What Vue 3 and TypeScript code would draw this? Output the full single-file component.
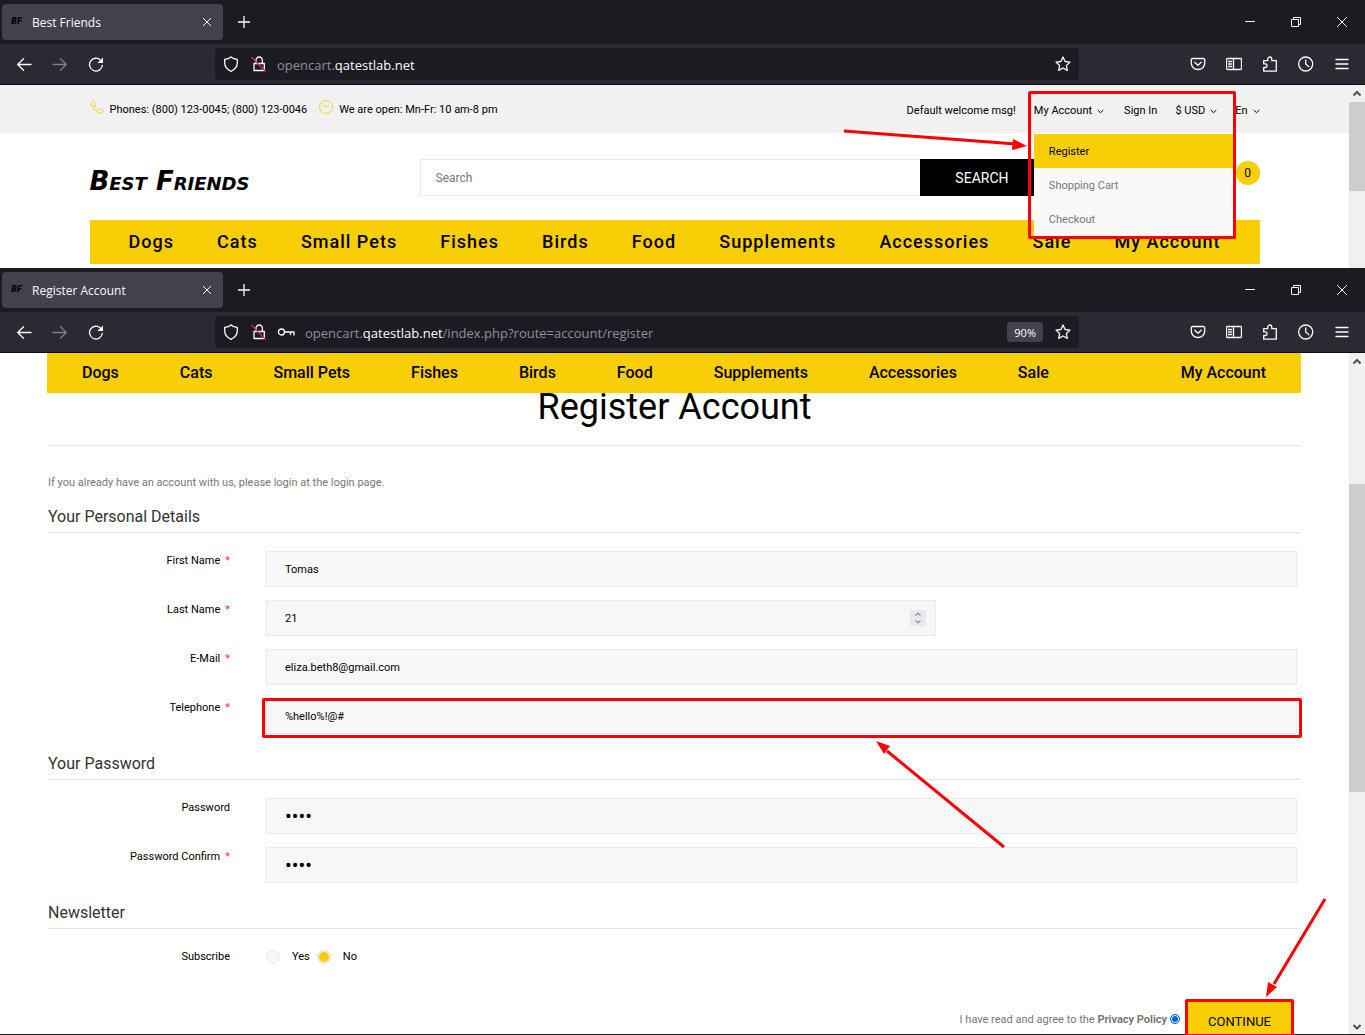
<script setup lang="ts">
import { ref } from 'vue'

interface BrowserWindow {
  id: 'home' | 'register'
  title: string
  path: string
  zoom: string
  savedLogin: boolean
  scroll: { before: number; thumb: number; after: number }
}

const windows: BrowserWindow[] = [
  { id: 'home', title: 'Best Friends', path: '', zoom: '', savedLogin: false, scroll: { before: 0, thumb: 89, after: 77 } },
  {
    id: 'register',
    title: 'Register Account',
    path: '/index.php?route=account/register',
    zoom: '90%',
    savedLogin: true,
    scroll: { before: 114, thumb: 307, after: 226 },
  },
]

const categories = ['Dogs', 'Cats', 'Small Pets', 'Fishes', 'Birds', 'Food', 'Supplements', 'Accessories', 'Sale']

interface Field {
  id: string
  label: string
  type: string
  required: boolean
}

const personal: Field[] = [
  { id: 'firstname', label: 'First Name', type: 'text', required: true },
  { id: 'lastname', label: 'Last Name', type: 'number', required: true },
  { id: 'email', label: 'E-Mail', type: 'email', required: true },
  { id: 'telephone', label: 'Telephone', type: 'tel', required: true },
]
const passwords: Field[] = [
  { id: 'password', label: 'Password', type: 'password', required: false },
  { id: 'confirm', label: 'Password Confirm', type: 'password', required: true },
]

const values = ref<Record<string, string | number>>({
  firstname: 'Tomas',
  lastname: 21,
  email: 'eliza.beth8@gmail.com',
  telephone: '%hello%!@#',
  password: 'abcd',
  confirm: 'abcd',
})
const newsletter = ref('no')
const agree = ref('yes')
const search = ref('')
</script>

<template>
  <div class="desktop">
    <section v-for="win in windows" :key="win.id" class="window" :class="win.id">
      <header class="chrome">
        <div class="tabs">
          <div class="tab">
            <span class="favicon">BF</span>
            <span class="tab-title">{{ win.title }}</span>
            <button class="tab-close" type="button" aria-label="Close tab">
              <svg width="10" height="10" viewBox="0 0 10 10"><path d="M1 1l8 8M9 1L1 9" /></svg>
            </button>
          </div>
          <button class="new-tab" type="button" aria-label="New tab">
            <svg width="12" height="12" viewBox="0 0 12 12"><path d="M6 0v12M0 6h12" /></svg>
          </button>
          <div class="controls">
            <button type="button" aria-label="Minimize">
              <svg width="12" height="12" viewBox="0 0 12 12"><path d="M1 5.500h10" /></svg>
            </button>
            <button type="button" aria-label="Restore">
              <svg width="12" height="12" viewBox="0 0 12 12"><path d="M1.500 3.500h7v7h-7zM3.500 3V1.500h7v7H9" /></svg>
            </button>
            <button type="button" aria-label="Close">
              <svg width="12" height="12" viewBox="0 0 12 12"><path d="M1 1l10 10M11 1L1 11" /></svg>
            </button>
          </div>
        </div>

        <div class="toolbar">
          <button class="tool" type="button" aria-label="Back">
            <svg class="icon" viewBox="0 0 16 16"><path d="M15 8.500H1.700M7.500 2.700L1.700 8.500l5.800 5.800" /></svg>
          </button>
          <button class="tool dim" type="button" aria-label="Forward">
            <svg class="icon" viewBox="0 0 16 16"><path d="M1 8.500h13.300M8.500 2.700l5.800 5.800-5.800 5.800" /></svg>
          </button>
          <button class="tool" type="button" aria-label="Reload">
            <svg class="icon" viewBox="0 0 16 16">
              <path d="M14.300 9.500A6.400 6.400 0 1 1 12.500 4.100" />
              <path class="solid" d="M15 1.500v5.600H9.400z" />
            </svg>
          </button>

          <div class="urlbar">
            <svg class="icon" viewBox="0 0 16 16">
              <path d="M8 .9C6.200 2.400 4 3 1.700 3.300v3.500c0 4 2.300 6.800 6.300 8.500 4-1.700 6.300-4.500 6.300-8.500V3.300C12 3 9.800 2.400 8 .9z" />
            </svg>
            <svg class="icon lock" viewBox="0 0 16 16">
              <path d="M3 7.500h10.300v7H3zM5 7.500V4.200a3.200 3.200 0 0 1 6.400 0v3.300" />
              <path class="slash" d="M1 1.500l13.500 14" />
            </svg>
            <svg v-if="win.savedLogin" class="icon key" viewBox="0 0 18 16">
              <circle cx="4.500" cy="8" r="3" />
              <path d="M7.500 8H17v3M13.500 8v2.500" />
            </svg>
            <span class="address">opencart.<b>qatestlab.net</b>{{ win.path }}</span>
            <button v-if="win.zoom" class="zoom" type="button">{{ win.zoom }}</button>
            <svg class="icon star" viewBox="0 0 16 16">
              <path d="M8 1l2.100 4.500 4.900.6-3.600 3.400.9 4.900L8 12l-4.300 2.400.9-4.900L1 6.100l4.900-.6z" />
            </svg>
          </div>

          <button class="tool" type="button" aria-label="Pocket">
            <svg class="icon" viewBox="0 0 16 16">
              <path d="M2.500 2.500h11a1.200 1.200 0 0 1 1.200 1.200v3.600a6.700 6.200 0 0 1-13.400 0V3.700a1.200 1.200 0 0 1 1.200-1.200z" />
              <path d="M4.800 6.300L8 9.200l3.200-2.900" />
            </svg>
          </button>
          <button class="tool" type="button" aria-label="Sidebar">
            <svg class="icon" viewBox="0 0 16 16">
              <path d="M1.500 2.500h13a1 1 0 0 1 1 1v9a1 1 0 0 1-1 1h-13a1 1 0 0 1-1-1v-9a1 1 0 0 1 1-1zM7.500 2.500v11M2.500 5.500h3M2.500 8h3M2.500 10.500h3" />
            </svg>
          </button>
          <button class="tool" type="button" aria-label="Extensions">
            <svg class="icon" viewBox="0 0 16 16">
              <path d="M1.700 15.200v-3.700h1.600a1.800 1.800 0 0 0 0-3.600H1.700V4.700h4.100V3a2 2 0 0 1 4 0v1.700h4.500v10.500z" />
            </svg>
          </button>
          <button class="tool" type="button" aria-label="History">
            <svg class="icon" viewBox="0 0 16 16">
              <circle cx="7.700" cy="8" r="7" />
              <path d="M7.700 3.800V8l3.200 2.700" />
            </svg>
          </button>
          <button class="tool" type="button" aria-label="Menu">
            <svg class="icon" viewBox="0 0 16 16"><path d="M2 3.500h12M2 8h12M2 12.500h12" /></svg>
          </button>
        </div>
      </header>

      <div class="viewport">
        <main v-if="win.id === 'home'" class="page">
          <div class="topbar">
            <div class="container topbar-row">
              <svg class="contact-icon" viewBox="0 0 16 16">
                <path d="M3.600 1C2.400 1.700 1 2.800 1.300 4.600c.5 2.700 2 5 4 6.900s4.200 3.200 6.700 3.500c1.600.1 2.400-1 2.900-2.200.2-.5 0-.9-.4-1.200l-2.300-1.600c-.5-.3-1-.2-1.300.2l-.9 1.200C8 10.600 5.900 8.500 4.900 6.300l1.200-.9c.4-.4.5-.8.200-1.300L4.800 1.300C4.500.9 4 .8 3.600 1z" />
              </svg>
              <span>Phones: (800) 123-0045; (800) 123-0046</span>
              <svg class="contact-icon second" viewBox="0 0 16 16">
                <circle cx="8" cy="8" r="7.400" />
                <path d="M4.500 5.500L8 8l3.500-2" />
              </svg>
              <span>We are open: Mn-Fr: 10 am-8 pm</span>

              <ul class="account-links">
                <li>Default welcome msg!</li>
                <li class="account">
                  <button type="button">
                    My Account
                    <svg class="caret" viewBox="0 0 7 5"><path d="M.7 1l2.800 2.700L6.300 1" /></svg>
                  </button>
                  <div class="dropdown">
                    <a class="active" href="#">Register</a>
                    <a href="#">Shopping Cart</a>
                    <a href="#">Checkout</a>
                  </div>
                  <div class="mark account-mark">
                    <svg class="arrow-right" width="186" height="26" viewBox="0 0 186 26">
                      <path class="shaft" d="M1 4l172 13" />
                      <path class="tip" d="M170 12l14 7-15 4z" />
                    </svg>
                  </div>
                </li>
                <li><a href="#">Sign In</a></li>
                <li>
                  <button type="button">
                    $ USD
                    <svg class="caret" viewBox="0 0 7 5"><path d="M.7 1l2.800 2.700L6.300 1" /></svg>
                  </button>
                </li>
                <li>
                  <button type="button">
                    En
                    <svg class="caret" viewBox="0 0 7 5"><path d="M.7 1l2.800 2.700L6.300 1" /></svg>
                  </button>
                </li>
              </ul>
            </div>
          </div>

          <div class="container masthead">
            <a class="logo" href="#">Best Friends</a>
            <form class="search" @submit.prevent>
              <input v-model="search" type="text" placeholder="Search" aria-label="Search" />
              <button type="submit">SEARCH</button>
            </form>
            <a class="cart" href="#" aria-label="Cart">0</a>
          </div>

          <nav class="container menu">
            <a v-for="item in categories" :key="item" href="#">{{ item }}</a>
            <a href="#">My Account</a>
          </nav>
        </main>

        <main v-else class="page">
          <nav class="sticky-menu">
            <a v-for="item in categories" :key="item" href="#">{{ item }}</a>
            <a class="last" href="#">My Account</a>
          </nav>

          <form class="register-form" @submit.prevent>
            <h1>Register Account</h1>
            <p>If you already have an account with us, please login at the <a href="#">login page</a>.</p>

            <h2>Your Personal Details</h2>
            <div class="rows">
              <div v-for="field in personal" :key="field.id" class="row">
                <label :for="field.id">{{ field.label }}<i v-if="field.required">*</i></label>
                <div class="control" :class="{ short: field.type === 'number' }">
                  <input :id="field.id" v-model="values[field.id]" :type="field.type" />
                  <svg v-if="field.type === 'number'" class="spinner" viewBox="0 0 16 16">
                    <path d="M5.500 5.500L8 3.200l2.500 2.300M5.500 10.500L8 12.800l2.500-2.300" />
                  </svg>
                  <div v-if="field.id === 'telephone'" class="mark phone-mark">
                    <svg class="arrow-up" width="134" height="112" viewBox="0 0 134 112">
                      <path class="shaft" d="M12 12l117 96" />
                      <path class="tip" d="M1 2l14 5-6 8z" />
                    </svg>
                  </div>
                </div>
              </div>
            </div>

            <h2>Your Password</h2>
            <div class="rows">
              <div v-for="field in passwords" :key="field.id" class="row">
                <label :for="field.id">{{ field.label }}<i v-if="field.required">*</i></label>
                <div class="control">
                  <input :id="field.id" v-model="values[field.id]" :type="field.type" />
                </div>
              </div>
            </div>

            <h2>Newsletter</h2>
            <div class="rows">
              <div class="row" role="radiogroup" aria-labelledby="subscribe">
                <span id="subscribe" class="row-label">Subscribe</span>
                <div class="choices">
                  <label><input v-model="newsletter" type="radio" name="newsletter" value="yes" />Yes</label>
                  <label><input v-model="newsletter" type="radio" name="newsletter" value="no" />No</label>
                </div>
              </div>
            </div>

            <div class="submit-row">
              <label for="agree">I have read and agree to the <b>Privacy Policy</b></label>
              <input id="agree" v-model="agree" type="radio" name="agree" value="yes" />
              <div class="submit">
                <button type="submit">CONTINUE</button>
                <div class="mark submit-mark">
                  <svg class="arrow-down" width="64" height="104" viewBox="0 0 64 104">
                    <path class="shaft" d="M61 3L10 88" />
                    <path class="tip" d="M2 101l2-15 9 5z" />
                  </svg>
                </div>
              </div>
            </div>
          </form>
        </main>

        <div class="scrollbar" aria-hidden="true">
          <svg class="scroll-arrow" viewBox="0 0 16 17"><path d="M4.500 10.500L8 7l3.500 3.500" /></svg>
          <div :style="{ flexGrow: win.scroll.before }"></div>
          <div class="thumb" :style="{ flexGrow: win.scroll.thumb }"></div>
          <div :style="{ flexGrow: win.scroll.after }"></div>
          <svg v-if="win.id === 'register'" class="scroll-arrow" viewBox="0 0 16 17"><path d="M4.500 7L8 10.500 11.500 7" /></svg>
        </div>
      </div>
    </section>
  </div>
</template>

<style>
body {
  margin: 0;
  background: #fff;
}
</style>

<style scoped>
.desktop,
.desktop * {
  box-sizing: border-box;
}

.desktop {
  display: flex;
  flex-direction: column;
  height: 100vh;
  overflow: hidden;
  color: #000;
  font-family: Roboto, sans-serif;
  font-size: 11px;
  line-height: 20px;
}

button,
input {
  margin: 0;
  font-family: inherit;
  font-size: inherit;
}

button {
  padding: 0;
  border: 0;
  background: none;
  color: inherit;
}

a {
  color: inherit;
  text-decoration: none;
}

.window {
  display: flex;
  flex-direction: column;
}

.window.register {
  position: relative;
  flex: 1;
  min-height: 0;
}

.window.register::after {
  content: '';
  position: absolute;
  right: 0;
  bottom: 0;
  left: 0;
  height: 1px;
  background: #1c1b22;
}

/* Browser chrome */
.chrome {
  flex: none;
  border-bottom: 1px solid #0c0c0d;
  background: #2b2a33;
  color: #fbfbfe;
  font-family: 'Open Sans', 'Noto Sans', sans-serif;
}

.chrome svg {
  flex: none;
  fill: none;
  stroke: currentColor;
}

.icon {
  width: 16px;
  height: 16px;
  stroke-width: 1.3;
  stroke-linejoin: round;
  stroke-linecap: round;
}

.icon .solid {
  fill: currentColor;
  stroke: none;
}

.icon .slash {
  stroke: #e22850;
}

.tabs {
  display: flex;
  align-items: center;
  height: 44px;
  padding-left: 2px;
  background: #1c1b22;
}

.tab {
  display: flex;
  align-items: center;
  width: 221px;
  height: 36px;
  padding: 0 11px 0 9px;
  border-radius: 4px;
  background: #42414d;
}

.favicon {
  width: 21px;
  color: #000;
  font: italic bold 8px/12px 'DejaVu Sans', sans-serif;
}

.tab-title {
  flex: 1;
  padding-top: 2px;
  font-size: 12px;
  line-height: 20px;
}

.tab-close,
.new-tab {
  display: flex;
}

.new-tab {
  margin-left: 15px;
}

.new-tab svg {
  stroke-width: 1.3;
}

.controls {
  display: flex;
  margin-left: auto;
}

.controls button {
  display: flex;
  align-items: center;
  justify-content: center;
  width: 46px;
  height: 44px;
}

.toolbar {
  display: flex;
  align-items: center;
  height: 40px;
  padding: 0 5px 0 6px;
}

.tool {
  display: flex;
  align-items: center;
  justify-content: center;
  width: 36px;
  height: 32px;
}

.dim {
  opacity: 0.4;
}

.urlbar {
  display: flex;
  align-items: center;
  flex: 1;
  height: 32px;
  margin: 0 101px;
  padding: 0 8px;
  border-radius: 4px;
  background: #1c1b22;
}

.lock {
  margin-left: 12px;
}

.urlbar .key {
  width: 18px;
  margin-left: 10px;
}

.address {
  flex: 1;
  margin-left: 10px;
  padding-top: 2px;
  color: #8f8f9d;
  font-size: 13px;
}

.address b {
  color: #fbfbfe;
  font-weight: 400;
}

.zoom {
  height: 20px;
  margin-right: 12px;
  padding: 0 7px;
  border-radius: 3px;
  background: #42414d;
  font-size: 11px;
}

/* Page area and its scrollbar */
.viewport {
  display: flex;
  flex: 1;
  min-height: 0;
}

.page {
  flex: 1;
  min-width: 0;
}

.scrollbar {
  display: flex;
  flex: none;
  flex-direction: column;
  width: 16px;
  background: #f0f0f0;
}

.thumb {
  background: #cdcdcd;
}

.scroll-arrow {
  flex: none;
  width: 16px;
  height: 17px;
  fill: none;
  stroke: #505050;
  stroke-width: 2;
}

/* Shop front */
.container {
  max-width: 1170px;
  margin: 0 auto;
}

.topbar {
  background: #f1f1f1;
}

.topbar-row {
  display: flex;
  align-items: center;
  height: 48px;
  padding-top: 2px;
}

.contact-icon {
  flex: none;
  width: 14px;
  height: 14px;
  margin: 0 6px 6px 0;
  fill: none;
  stroke: #f8ce07;
}

.contact-icon.second {
  margin-left: 12px;
}

.account-links {
  display: flex;
  align-self: flex-start;
  gap: 18px;
  margin: 0 0 0 auto;
  padding: 0;
  line-height: 48px;
  list-style: none;
}

.account-links button {
  display: flex;
  align-items: center;
  gap: 5px;
  line-height: 48px;
}

.caret {
  width: 7px;
  height: 5px;
  fill: none;
  stroke: currentColor;
}

.account {
  position: relative;
  margin-right: 2px;
}

.dropdown {
  position: absolute;
  z-index: 2;
  top: 47px;
  left: 0;
  width: 200px;
  background: #f9f9f9;
  color: #777;
  line-height: 36px;
}

.dropdown a {
  display: block;
  height: 34px;
  padding: 0 15px;
}

.dropdown .active {
  background: #f8ce07;
  color: #000;
}

.masthead {
  display: flex;
  align-items: flex-start;
  padding: 26px 0 16px;
}

.logo {
  width: 330px;
  font: italic bold 26px/45px 'DejaVu Sans', sans-serif;
  font-variant: small-caps;
}

.search {
  display: flex;
  width: 624px;
}

.search input {
  flex: 1;
  min-width: 0;
  height: 37px;
  padding: 0 15px;
  border: 1px solid #ebebeb;
  border-right: 0;
  font-size: 12px;
}

.search input::placeholder {
  color: #777;
}

.search button {
  height: 37px;
  padding: 0 35px;
  background: #000;
  color: #fff;
  font-size: 14px;
}

.cart {
  width: 24px;
  height: 24px;
  margin: 2px 0 0 auto;
  border-radius: 50%;
  background: #f8ce07;
  font-size: 12px;
  line-height: 24px;
  text-align: center;
}

.menu {
  display: flex;
  justify-content: space-between;
  margin-bottom: 4px;
  padding: 0 39px;
  background: #f8ce07;
  font-size: 18px;
  font-weight: 500;
  letter-spacing: 1px;
  line-height: 44px;
}

/* Registration page */
.sticky-menu {
  position: relative;
  z-index: 1;
  display: flex;
  gap: 61px;
  margin: 0 48px 0 47px;
  padding: 0 35px;
  background: #f8ce07;
  font-size: 16px;
  font-weight: 500;
  line-height: 40px;
}

.sticky-menu .last {
  margin-left: auto;
}

.register-form {
  padding: 0 48px;
}

h1 {
  margin: 0;
  padding-bottom: 24px;
  border-bottom: 1px solid #ebebeb;
  font-size: 36px;
  font-weight: 400;
  line-height: 28px;
  text-align: center;
}

p {
  margin: 27px 0 14px;
  color: #777;
}

h2 {
  margin: 0;
  padding-bottom: 5px;
  border-bottom: 1px solid #e5e5e5;
  color: #333;
  font-size: 16px;
  font-weight: 400;
  line-height: 20px;
}

.rows {
  display: flex;
  flex-direction: column;
  gap: 13px;
  padding: 18px 4px 20px 0;
}

.row {
  display: flex;
  gap: 36px;
}

.row > label,
.row-label {
  width: 182px;
  text-align: right;
}

.row i {
  margin-left: 5px;
  color: #f33;
  font-style: normal;
}

.control {
  position: relative;
  flex: 1;
}

.control.short {
  flex: 0 1 670px;
}

.control input {
  display: block;
  width: 100%;
  height: 36px;
  padding: 0 18px;
  border: 1px solid #ebebeb;
  background: #f7f7f7;
  color: #000;
}

.control input[type='number'] {
  appearance: textfield;
}

.control input[type='password'] {
  font-size: 20px;
}

.spinner {
  position: absolute;
  top: 10px;
  right: 10px;
  width: 16px;
  height: 16px;
  background: #e9e9ed;
  fill: none;
  stroke: #8f8f9d;
  stroke-width: 1.3;
}

.choices {
  display: flex;
  gap: 7px;
}

.choices label {
  display: flex;
  align-items: center;
}

.choices input {
  width: 14px;
  height: 14px;
  margin-right: 12px;
  border: 1px solid #ebebeb;
  border-radius: 50%;
  background: #f7f7f7;
  appearance: none;
}

.choices input:checked {
  background: #f8ce07;
  box-shadow: inset 0 0 0 1px #f7f7f7;
}

.submit-row {
  display: flex;
  align-items: flex-start;
  justify-content: flex-end;
  margin: 15px 10px 0 0;
  color: #777;
}

.submit-row > label {
  padding-top: 8px;
}

.submit-row > input {
  width: 10px;
  height: 10px;
  margin: 12px 8px 0 3px;
  border: 1px solid #0060df;
  border-radius: 50%;
  background: #0060df;
  box-shadow: inset 0 0 0 1px #fff;
  appearance: none;
}

.submit {
  position: relative;
}

.submit button {
  display: block;
  height: 32px;
  padding: 6px 20px 0;
  background: #f8ce07;
  color: #000;
  font-size: 13px;
}

/* Review marks: red frames and arrows */
.mark {
  position: absolute;
  z-index: 3;
  border: 3px solid #f00;
  border-radius: 2px;
  pointer-events: none;
}

.mark svg {
  position: absolute;
}

.shaft {
  fill: none;
  stroke: #f00;
  stroke-width: 3;
}

.tip {
  fill: #f00;
}

.account-mark {
  top: 4px;
  left: -6px;
  width: 208px;
  height: 148px;
}

.arrow-right {
  top: 33px;
  right: 204px;
}

.phone-mark {
  inset: 0 -5px -4px -4px;
}

.arrow-up {
  top: 38px;
  right: 290px;
}

.submit-mark {
  inset: -3px;
}

.arrow-down {
  right: -37px;
  bottom: 34px;
}
</style>
